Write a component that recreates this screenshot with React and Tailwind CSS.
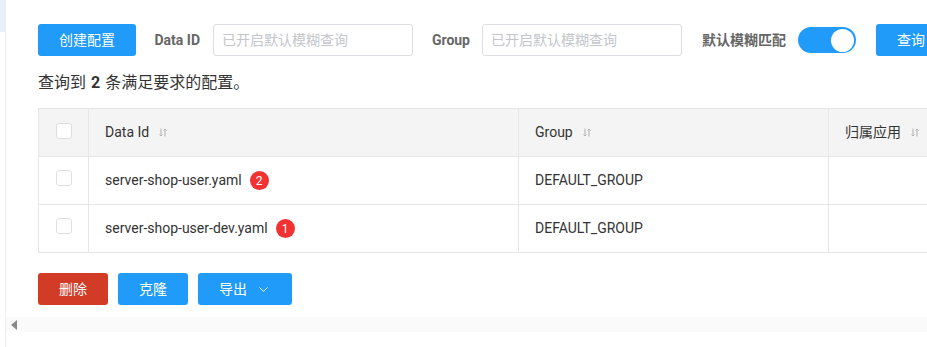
import { ChevronDown } from 'lucide-react';

const font = { fontFamily: 'Roboto, "Noto Sans CJK SC", sans-serif' };

function SortIcon() {
  return (
    <svg width="8" height="9" viewBox="0 0 8 9" className="ml-[10px] inline-block" fill="none">
      <path d="M2 0.5V8M0.5 6.5L2 8L3.5 6.5" stroke="#b3b3b3" strokeWidth="1" />
      <path d="M6 8.5V1M4.5 2.5L6 1L7.5 2.5" stroke="#b3b3b3" strokeWidth="1" />
    </svg>
  );
}

function Checkbox() {
  return <div className="w-4 h-4 rounded-[3px] border border-[#dcdee3] bg-white" />;
}

function Badge({ n }) {
  return (
    <span className="ml-2 inline-flex items-center justify-center w-[19px] h-[19px] rounded-full bg-[#f23232] text-white text-[12px] leading-none">
      {n}
    </span>
  );
}

const rows = [
  { id: 'server-shop-user.yaml', badge: 2, group: 'DEFAULT_GROUP' },
  { id: 'server-shop-user-dev.yaml', badge: 1, group: 'DEFAULT_GROUP' },
];

export default function App() {
  return (
    <div className="w-[927px] h-[347px] overflow-hidden flex bg-white text-[#333]" style={font}>
      <div className="w-[5px] shrink-0">
        <div className="h-8 bg-[#e5f0fc]" />
      </div>
      <div className="flex-1 min-w-0 border-l border-[#eeeeee] flex flex-col overflow-hidden">
        <div className="w-[1300px] pl-8 pt-6">
          <div className="flex items-center h-8">
            <button className="w-[98px] h-8 rounded-[3px] bg-[#209bfa] text-white text-[14px]">创建配置</button>
            <div className="w-[77px] pr-[13px] text-right text-[14px] font-bold text-[#666]">Data ID</div>
            <input
              placeholder="已开启默认模糊查询"
              className="w-[200px] h-8 rounded-[3px] border border-[#dcdee3] px-2 text-[14px] outline-none placeholder:text-[#c4c6cc]"
            />
            <div className="w-[69px] pr-[12px] text-right text-[14px] font-bold text-[#666]">Group</div>
            <input
              placeholder="已开启默认模糊查询"
              className="w-[200px] h-8 rounded-[3px] border border-[#dcdee3] px-2 text-[14px] outline-none placeholder:text-[#c4c6cc]"
            />
            <div className="w-[116px] pr-[12px] text-right text-[14px] font-bold text-[#666]">默认模糊匹配</div>
            <div className="w-[58px] h-[26px] rounded-full bg-[#209bfa] flex items-center justify-end pr-[2px]">
              <div className="w-[23px] h-[23px] rounded-full bg-white" />
            </div>
            <button className="ml-5 w-[98px] h-8 rounded-[3px] bg-[#209bfa] text-white text-[14px] text-left pl-[21px]">查询</button>
          </div>

          <div className="mt-[15px] h-[23px] flex items-center text-[16px] text-[#333]">
            查询到 <b className="mx-[5px]">2</b> 条满足要求的配置。
          </div>

          <div className="mt-[14px] border-t border-l border-[#e6e6e6]">
            <div className="flex h-12 bg-[#f4f4f4] border-b border-[#e6e6e6] text-[14px]">
              <div className="w-[50px] border-r border-[#e6e6e6] flex justify-center pt-[14px]">
                <Checkbox />
              </div>
              <div className="w-[430px] border-r border-[#e6e6e6] flex items-center pl-4">
                Data Id <SortIcon />
              </div>
              <div className="w-[310px] border-r border-[#e6e6e6] flex items-center pl-4">
                Group <SortIcon />
              </div>
              <div className="w-[300px] border-r border-[#e6e6e6] flex items-center pl-4">
                归属应用 <SortIcon />
              </div>
            </div>
            {rows.map((r) => (
              <div key={r.id} className="flex h-12 border-b border-[#e6e6e6] text-[14px]">
                <div className="w-[50px] border-r border-[#e6e6e6] flex justify-center pt-[13px]">
                  <Checkbox />
                </div>
                <div className="w-[430px] border-r border-[#e6e6e6] flex items-center pl-4">
                  {r.id}
                  <Badge n={r.badge} />
                </div>
                <div className="w-[310px] border-r border-[#e6e6e6] flex items-center pl-4">{r.group}</div>
                <div className="w-[300px] border-r border-[#e6e6e6]" />
              </div>
            ))}
          </div>

          <div className="mt-5 flex gap-[10px] text-[14px] text-white">
            <button className="w-[70px] h-8 rounded-[3px] bg-[#d23c26]">删除</button>
            <button className="w-[70px] h-8 rounded-[3px] bg-[#209bfa]">克隆</button>
            <button className="w-[94px] h-8 rounded-[3px] bg-[#209bfa] flex items-center justify-center gap-[9px]">
              导出 <ChevronDown size={15} strokeWidth={1.5} />
            </button>
          </div>
        </div>

        <div className="mt-3 h-[15px] bg-[#fafafa] flex items-center pl-[5px]">
          <div className="w-0 h-0 border-y-[5px] border-y-transparent border-r-[6px] border-r-[#8a8a8a]" />
        </div>
      </div>
    </div>
  );
}
